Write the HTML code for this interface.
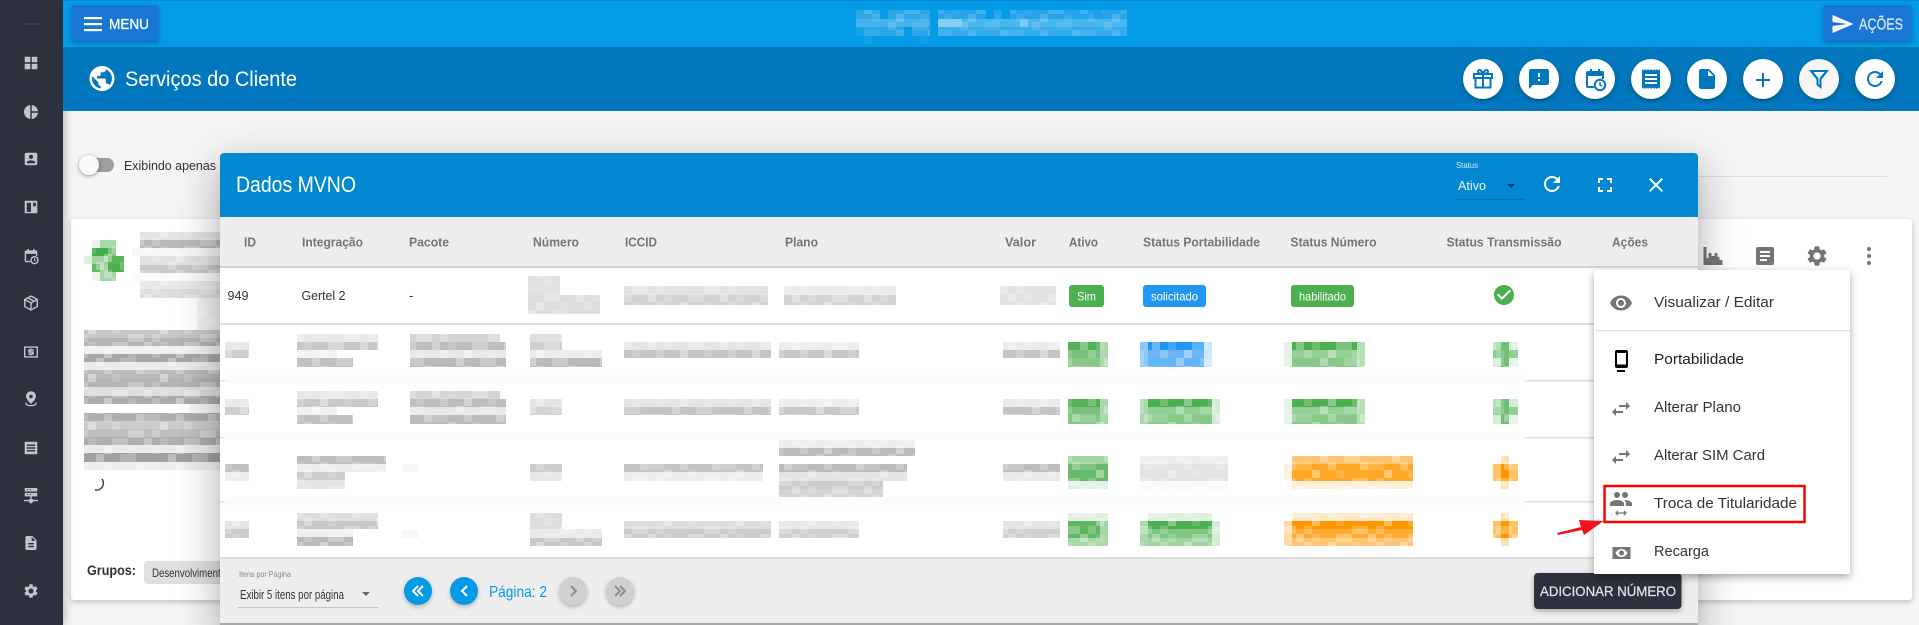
<!DOCTYPE html>
<html lang="pt">
<head>
<meta charset="utf-8">
<title>Serviços do Cliente</title>
<style>
html,body{margin:0;padding:0}
body{width:1919px;height:625px;overflow:hidden;position:relative;background:#f5f5f5;font-family:"Liberation Sans",sans-serif}
.a{position:absolute;display:block}
svg.a{left:0;top:0;width:1919px;height:625px}
svg text{font-family:"Liberation Sans",sans-serif}
#card{left:71px;top:219px;width:1841px;height:381px;background:#fff;border-radius:3px;box-shadow:0 2px 6px rgba(0,0,0,.22)}
#modal{left:220px;top:153px;width:1478px;height:470px;background:#fff;border-radius:4px 4px 0 0;box-shadow:0 11px 15px -7px rgba(0,0,0,.2),0 24px 38px 3px rgba(0,0,0,.14),0 9px 46px 8px rgba(0,0,0,.12)}
#side{left:0;top:0;width:63px;height:625px;background:#2d303d;box-shadow:0 0 10px rgba(0,0,0,.35)}
#top{left:63px;top:0;width:1856px;height:47px;background:#039be5;border-top:1px solid #0288d1;box-sizing:border-box}
#title{left:63px;top:47px;width:1856px;height:64px;background:#0277bd}
#menu{left:1594px;top:270px;width:256px;height:304px;background:#fff;box-shadow:0 3px 8px rgba(0,0,0,.35)}
.btn{position:absolute;background:#1976d2;border-radius:4px;top:5px;height:36px;box-shadow:0 2px 4px rgba(0,0,0,.25)}
.rb{position:absolute;top:59px;width:40px;height:40px;border-radius:50%;background:#fff;box-shadow:0 2px 4px rgba(0,0,0,.3)}
</style>
</head>
<body>

<div class="a" id="card"></div>
<svg class="a" viewBox="0 0 1919 625" xmlns="http://www.w3.org/2000/svg">
  <defs>
    <pattern id="n0" x="0" y="6" width="72" height="48" patternUnits="userSpaceOnUse">
      <g fill="#fff">
        <rect x="0" y="0" width="8" height="8" opacity=".3"/><rect x="16" y="0" width="8" height="8" opacity=".15"/><rect x="40" y="0" width="16" height="8" opacity=".25"/>
        <rect x="8" y="8" width="8" height="8" opacity=".2"/><rect x="32" y="8" width="8" height="8" opacity=".35"/><rect x="56" y="8" width="8" height="8" opacity=".15"/>
        <rect x="24" y="16" width="8" height="8" opacity=".3"/><rect x="48" y="16" width="16" height="8" opacity=".2"/>
        <rect x="0" y="24" width="16" height="8" opacity=".15"/><rect x="32" y="24" width="8" height="8" opacity=".25"/><rect x="64" y="24" width="8" height="8" opacity=".3"/>
        <rect x="16" y="32" width="8" height="8" opacity=".35"/><rect x="40" y="32" width="8" height="8" opacity=".15"/>
        <rect x="8" y="40" width="8" height="8" opacity=".2"/><rect x="56" y="40" width="16" height="8" opacity=".25"/>
      </g>
    </pattern>
  </defs>
  <!-- page line -->
  <rect x="1690" y="176" width="197" height="1" fill="#ddd"/>
  <!-- toggle -->
  <rect x="82" y="158" width="32" height="14" rx="7" fill="#9e9e9e"/>
  <circle cx="89" cy="165" r="10" fill="#fafafa" style="filter:drop-shadow(0 1px 2px rgba(0,0,0,.4))"/>
  <text x="124" y="170" font-size="13" fill="#333" textLength="92" lengthAdjust="spacingAndGlyphs">Exibindo apenas</text>

  <!-- avatar mosaic -->
  <rect x="92" y="240" width="8" height="8" fill="#e8f5e9"/><rect x="100" y="240" width="16" height="8" fill="#a8dbaa"/>
  <rect x="92" y="248" width="16" height="8" fill="#43ad47"/><rect x="108" y="248" width="8" height="8" fill="#7cc67f"/>
  <rect x="84" y="256" width="8" height="8" fill="#dcefdc"/><rect x="92" y="256" width="16" height="8" fill="#a0d5a3"/><rect x="108" y="256" width="16" height="8" fill="#58b45c"/>
  <rect x="92" y="264" width="8" height="8" fill="#66bb6a"/><rect x="100" y="264" width="8" height="8" fill="#a5d6a7"/><rect x="108" y="264" width="16" height="8" fill="#4caf50"/>
  <rect x="92" y="272" width="8" height="9" fill="#e8f5e9"/><rect x="100" y="272" width="16" height="9" fill="#a5d6a7"/>

  <!-- card text mosaics -->
  <rect x="140" y="232" width="80" height="8" fill="#e4e4e4"/><rect x="140" y="240" width="80" height="8" fill="#b9b9b9"/>
  <rect x="132" y="248" width="88" height="8" fill="#f6f6f6"/><rect x="140" y="256" width="80" height="9" fill="#e2e2e2"/><rect x="140" y="265" width="80" height="8" fill="#c8c8c8"/>
  <rect x="132" y="273" width="88" height="8" fill="#fafafa"/><rect x="140" y="281" width="80" height="8" fill="#e8e8e8"/><rect x="140" y="289" width="80" height="9" fill="#dcdcdc"/>
  <rect x="197" y="298" width="23" height="32" fill="#f1f1f1"/>
  <rect x="84" y="330" width="136" height="8" fill="#c8c8c8"/><rect x="84" y="338" width="136" height="8" fill="#b5b5b5"/><rect x="84" y="346" width="136" height="8" fill="#f0f0f0"/><rect x="84" y="354" width="136" height="8" fill="#a8a8a8"/><rect x="84" y="362" width="136" height="8" fill="#eaeaea"/><rect x="84" y="370" width="136" height="8" fill="#bbb"/><rect x="84" y="378" width="136" height="9" fill="#b4b4b4"/><rect x="84" y="387" width="136" height="9" fill="#ddd"/><rect x="84" y="396" width="136" height="8" fill="#ababab"/>
  <rect x="190" y="404" width="30" height="9" fill="#f4f4f4"/>
  <rect x="84" y="413" width="136" height="8" fill="#aeaeae"/><rect x="84" y="421" width="136" height="8" fill="#ccc"/><rect x="84" y="429" width="136" height="8" fill="#c0c0c0"/><rect x="84" y="437" width="136" height="8" fill="#aeaeae"/><rect x="84" y="445" width="136" height="8" fill="#eaeaea"/><rect x="84" y="453" width="136" height="9" fill="#a0a0a0"/><rect x="84" y="462" width="136" height="8" fill="#eee"/>
  <rect x="84" y="230" width="136" height="240" fill="url(#n0)"/>
  <!-- spinner -->
  <path d="M102 479A7 7 0 0 1 95 490" fill="none" stroke="#444" stroke-width="1.6"/>
  <!-- grupos -->
  <text x="87" y="575" font-size="14" font-weight="bold" fill="#333" textLength="49" lengthAdjust="spacingAndGlyphs">Grupos:</text>
  <rect x="144" y="561" width="90" height="23" rx="4" fill="#e0e0e0"/>
  <text x="152" y="577" font-size="12" fill="#333" textLength="74" lengthAdjust="spacingAndGlyphs">Desenvolvimento</text>

  <!-- card icons -->
  <path d="M1703.500 247h3v11h2v-5h3v3h3v-3h3v4h2v3h3v5h-19z" fill="#757575" opacity=".98"/>
  <path fill="#757575" d="M1758 247h14a2 2 0 0 1 2 2v14a2 2 0 0 1-2 2h-14a2 2 0 0 1-2-2v-14a2 2 0 0 1 2-2zm2 4v2h10v-2zm0 4v2h10v-2zm0 4v2h7v-2z"/>
  <path fill="#757575" transform="translate(1805,244)" d="M19.14 12.94c.04-.3.06-.61.06-.94 0-.32-.02-.64-.07-.94l2.03-1.58a.49.49 0 0 0 .12-.61l-1.92-3.32a.488.488 0 0 0-.59-.22l-2.39.96c-.5-.38-1.03-.7-1.62-.94l-.36-2.54a.484.484 0 0 0-.48-.41h-3.84c-.24 0-.43.17-.47.41l-.36 2.54c-.59.24-1.13.57-1.62.94l-2.39-.96c-.22-.08-.47 0-.59.22L2.74 8.87c-.12.21-.08.47.12.61l2.03 1.58c-.05.3-.09.63-.09.94s.02.64.07.94l-2.03 1.58a.49.49 0 0 0-.12.61l1.92 3.32c.12.22.37.29.59.22l2.39-.96c.5.38 1.03.7 1.62.94l.36 2.54c.05.24.24.41.48.41h3.84c.24 0 .44-.17.47-.41l.36-2.54c.59-.24 1.13-.56 1.62-.94l2.39.96c.22.08.47 0 .59-.22l1.92-3.32c.12-.22.07-.47-.12-.61l-2.01-1.58zM12 15.6c-1.98 0-3.6-1.62-3.6-3.6s1.62-3.6 3.6-3.6 3.6 1.62 3.6 3.6-1.62 3.6-3.6 3.6z"/>
  <g fill="#757575"><circle cx="1869" cy="249" r="2"/><circle cx="1869" cy="256" r="2"/><circle cx="1869" cy="263" r="2"/></g>
</svg>

<!-- MODAL -->
<div class="a" id="modal"></div>
<svg class="a" viewBox="0 0 1919 625" xmlns="http://www.w3.org/2000/svg">
  <path d="M220 157a4 4 0 0 1 4-4h1470a4 4 0 0 1 4 4v60H220z" fill="#0288d1"/>
  <text x="236" y="192" font-size="22" fill="#fff" textLength="120" lengthAdjust="spacingAndGlyphs">Dados MVNO</text>
  <text x="1456" y="168" font-size="8" fill="#d5ecf8" textLength="22" lengthAdjust="spacingAndGlyphs">Status</text>
  <text x="1458" y="190" font-size="13" fill="#e8f4fb" textLength="28" lengthAdjust="spacingAndGlyphs">Ativo</text>
  <path d="M1507 184h8l-4 4z" fill="#01426f"/>
  <rect x="1456" y="199" width="68" height="1" fill="#0272b0"/>
  <path fill="#fff" transform="translate(1540,172)" d="M17.65 6.35C16.2 4.9 14.21 4 12 4c-4.42 0-7.99 3.58-7.99 8s3.57 8 7.99 8c3.73 0 6.84-2.55 7.73-6h-2.08c-.82 2.33-3.04 4-5.65 4-3.31 0-6-2.69-6-6s2.69-6 6-6c1.66 0 3.14.69 4.22 1.78L13 11h7V4l-2.35 2.35z"/>
  <path fill="#fff" transform="translate(1593,173)" d="M7 14H5v5h5v-2H7v-3zm-2-4h2V7h3V5H5v5zm12 7h-3v2h5v-5h-2v3zM14 5v2h3v3h2V5h-5z"/>
  <path fill="#fff" transform="translate(1644,173)" d="M19 6.41L17.59 5 12 10.59 6.41 5 5 6.41 10.59 12 5 17.59 6.41 19 12 13.41 17.59 19 19 17.59 13.41 12z"/>

  <!-- table head -->
  <rect x="220" y="217" width="1478" height="50" fill="#eee"/>
  <rect x="220" y="266" width="1478" height="2" fill="#d4d4d4"/>
  <g font-size="13" font-weight="bold" fill="#757575">
    <text x="244" y="246.500" textLength="12" lengthAdjust="spacingAndGlyphs">ID</text>
    <text x="302" y="246.500" textLength="61" lengthAdjust="spacingAndGlyphs">Integração</text>
    <text x="409" y="246.500" textLength="40" lengthAdjust="spacingAndGlyphs">Pacote</text>
    <text x="533" y="246.500" textLength="46" lengthAdjust="spacingAndGlyphs">Número</text>
    <text x="625" y="246.500" textLength="32" lengthAdjust="spacingAndGlyphs">ICCID</text>
    <text x="785" y="246.500" textLength="33" lengthAdjust="spacingAndGlyphs">Plano</text>
    <text x="1005" y="246.500" textLength="31" lengthAdjust="spacingAndGlyphs">Valor</text>
    <text x="1069" y="246.500" textLength="29" lengthAdjust="spacingAndGlyphs">Ativo</text>
    <text x="1143" y="246.500" textLength="117" lengthAdjust="spacingAndGlyphs">Status Portabilidade</text>
    <text x="1290.500" y="246.500" textLength="86" lengthAdjust="spacingAndGlyphs">Status Número</text>
    <text x="1446.500" y="246.500" textLength="115" lengthAdjust="spacingAndGlyphs">Status Transmissão</text>
    <text x="1612" y="246.500" textLength="36" lengthAdjust="spacingAndGlyphs">Ações</text>
  </g>

  <!-- row 1 -->
  <g font-size="13" fill="#333">
    <text x="227.500" y="300" textLength="21" lengthAdjust="spacingAndGlyphs">949</text>
    <text x="301.500" y="300" textLength="44" lengthAdjust="spacingAndGlyphs">Gertel 2</text>
    <text x="409" y="300">-</text>
  </g>
  <rect x="528" y="276" width="32" height="19" fill="#e2e2e2"/><rect x="528" y="295" width="72" height="19" fill="#dcdcdc"/>
  <rect x="624" y="286" width="144" height="9" fill="#e2e2e2"/><rect x="624" y="295" width="144" height="10" fill="#d2d2d2"/>
  <rect x="784" y="286" width="112" height="9" fill="#eaeaea"/><rect x="784" y="295" width="112" height="10" fill="#d4d4d4"/>
  <rect x="1000" y="286" width="56" height="19" fill="#e2e2e2"/>
  <rect x="520" y="270" width="540" height="46" fill="url(#n0)"/>
  <rect x="1069" y="285" width="35" height="22" rx="3" fill="#4caf50"/>
  <text x="1077" y="300.500" font-size="12" fill="#fff" textLength="19" lengthAdjust="spacingAndGlyphs">Sim</text>
  <rect x="1143" y="285" width="63" height="22" rx="3" fill="#2196f3"/>
  <text x="1151" y="300.500" font-size="12" fill="#fff" textLength="47" lengthAdjust="spacingAndGlyphs">solicitado</text>
  <rect x="1291" y="285" width="63" height="22" rx="3" fill="#4caf50"/>
  <text x="1299" y="300.500" font-size="12" fill="#fff" textLength="47" lengthAdjust="spacingAndGlyphs">habilitado</text>
  <path fill="#4caf50" transform="translate(1492,283)" d="M12 2C6.48 2 2 6.48 2 12s4.48 10 10 10 10-4.48 10-10S17.52 2 12 2zm-2 15l-5-5 1.41-1.41L10 14.17l7.59-7.59L19 8l-9 9z"/>

  <!-- separators -->
  <rect x="220" y="323" width="1478" height="2" fill="#e0e0e0"/>
  <g fill="#e0e0e0">
    <rect x="220" y="380" width="1478" height="1.5"/><rect x="220" y="437" width="1478" height="1.5"/><rect x="220" y="501" width="1478" height="1.5"/>
  </g>
  <g fill="#fbfbfb">
    <rect x="225" y="375" width="1300" height="8"/><rect x="225" y="432" width="1300" height="8"/><rect x="225" y="497" width="1300" height="8"/>
  </g>

  <!-- row 2 -->
  <rect x="225" y="342" width="24" height="8" fill="#e8e8e8"/><rect x="225" y="350" width="24" height="8" fill="#cfcfcf"/>
  <rect x="297" y="334" width="81" height="8" fill="#e8e8e8"/><rect x="297" y="342" width="81" height="8" fill="#c8c8c8"/><rect x="297" y="350" width="40" height="8" fill="#f2f2f2"/><rect x="297" y="358" width="56" height="9" fill="#c0c0c0"/>
  <rect x="410" y="334" width="90" height="8" fill="#d5d5d5"/><rect x="410" y="342" width="96" height="8" fill="#bdbdbd"/><rect x="410" y="350" width="96" height="8" fill="#e8e8e8"/><rect x="410" y="358" width="96" height="9" fill="#bbb"/>
  <rect x="530" y="334" width="32" height="8" fill="#e0e0e0"/><rect x="530" y="342" width="32" height="8" fill="#cfcfcf"/><rect x="530" y="350" width="72" height="8" fill="#ececec"/><rect x="530" y="358" width="72" height="9" fill="#bbb"/>
  <rect x="624" y="342" width="147" height="8" fill="#e4e4e4"/><rect x="624" y="350" width="147" height="8" fill="#c4c4c4"/>
  <rect x="779" y="342" width="80" height="8" fill="#eee"/><rect x="779" y="350" width="80" height="8" fill="#c8c8c8"/>
  <rect x="1003" y="342" width="57" height="8" fill="#eaeaea"/><rect x="1003" y="350" width="57" height="8" fill="#c4c4c4"/>
  <rect x="1068" y="342" width="32" height="8" fill="#52b156"/><rect x="1100" y="342" width="8" height="25" fill="#aad8ac"/><rect x="1068" y="350" width="32" height="8" fill="#78c07b"/><rect x="1068" y="358" width="32" height="9" fill="#88c98a"/>
  <rect x="1140" y="342" width="8" height="25" fill="#8fc9f8"/><rect x="1148" y="342" width="56" height="8" fill="#2196f3"/><rect x="1204" y="342" width="8" height="25" fill="#cbe6fc"/><rect x="1148" y="350" width="56" height="8" fill="#6db6f6"/><rect x="1148" y="358" width="56" height="9" fill="#64b5f6"/>
  <rect x="1284" y="342" width="8" height="25" fill="#e3f2e4"/><rect x="1292" y="342" width="65" height="8" fill="#4caf50"/><rect x="1357" y="342" width="8" height="25" fill="#b5dfb7"/><rect x="1292" y="350" width="65" height="8" fill="#93d096"/><rect x="1292" y="358" width="65" height="9" fill="#88c98a"/>
  <rect x="1493" y="350" width="25" height="8" fill="#8fcf92"/><rect x="1501" y="342" width="8" height="25" fill="#6fc073"/><rect x="1493" y="342" width="8" height="8" fill="#b5dfb7"/><rect x="1509" y="342" width="9" height="8" fill="#d6ecd7"/><rect x="1493" y="358" width="8" height="9" fill="#d6ecd7"/><rect x="1509" y="358" width="9" height="9" fill="#e8f5e9"/>

  <!-- row 3 -->
  <rect x="225" y="399" width="24" height="8" fill="#e8e8e8"/><rect x="225" y="407" width="24" height="8" fill="#cfcfcf"/>
  <rect x="297" y="391" width="81" height="8" fill="#e8e8e8"/><rect x="297" y="399" width="81" height="8" fill="#c8c8c8"/><rect x="297" y="407" width="40" height="8" fill="#f2f2f2"/><rect x="297" y="415" width="56" height="9" fill="#c0c0c0"/>
  <rect x="410" y="391" width="90" height="8" fill="#d5d5d5"/><rect x="410" y="399" width="96" height="8" fill="#bdbdbd"/><rect x="410" y="407" width="96" height="8" fill="#e8e8e8"/><rect x="410" y="415" width="96" height="9" fill="#bbb"/>
  <rect x="530" y="399" width="32" height="8" fill="#e4e4e4"/><rect x="530" y="407" width="32" height="8" fill="#d2d2d2"/>
  <rect x="624" y="399" width="147" height="8" fill="#e4e4e4"/><rect x="624" y="407" width="147" height="8" fill="#c4c4c4"/>
  <rect x="779" y="399" width="80" height="8" fill="#eee"/><rect x="779" y="407" width="80" height="8" fill="#c8c8c8"/>
  <rect x="1003" y="399" width="57" height="8" fill="#eaeaea"/><rect x="1003" y="407" width="57" height="8" fill="#c4c4c4"/>
  <rect x="1068" y="399" width="32" height="8" fill="#52b156"/><rect x="1100" y="399" width="8" height="25" fill="#aad8ac"/><rect x="1068" y="407" width="32" height="8" fill="#78c07b"/><rect x="1068" y="415" width="32" height="9" fill="#88c98a"/>
  <rect x="1140" y="399" width="8" height="25" fill="#a9d8ab"/><rect x="1148" y="399" width="64" height="8" fill="#4caf50"/><rect x="1212" y="399" width="8" height="25" fill="#d4ecd5"/><rect x="1148" y="407" width="64" height="8" fill="#8fcf92"/><rect x="1148" y="415" width="64" height="9" fill="#88c98a"/>
  <rect x="1284" y="399" width="8" height="25" fill="#e3f2e4"/><rect x="1292" y="399" width="65" height="8" fill="#4caf50"/><rect x="1357" y="399" width="8" height="25" fill="#b5dfb7"/><rect x="1292" y="407" width="65" height="8" fill="#93d096"/><rect x="1292" y="415" width="65" height="9" fill="#88c98a"/>
  <rect x="1493" y="407" width="25" height="8" fill="#8fcf92"/><rect x="1501" y="399" width="8" height="25" fill="#6fc073"/><rect x="1493" y="399" width="8" height="8" fill="#b5dfb7"/><rect x="1509" y="399" width="9" height="8" fill="#d6ecd7"/><rect x="1493" y="415" width="8" height="9" fill="#d6ecd7"/><rect x="1509" y="415" width="9" height="9" fill="#e8f5e9"/>

  <!-- row 4 -->
  <rect x="225" y="464" width="24" height="8" fill="#c0c0c0"/><rect x="225" y="472" width="24" height="9" fill="#eee"/>
  <rect x="297" y="456" width="89" height="8" fill="#bdbdbd"/><rect x="297" y="464" width="89" height="8" fill="#eee"/><rect x="297" y="472" width="48" height="8" fill="#ccc"/><rect x="297" y="480" width="48" height="9" fill="#e4e4e4"/>
  <rect x="402" y="464" width="16" height="8" fill="#f6f6f6"/>
  <rect x="530" y="464" width="32" height="8" fill="#ccc"/><rect x="530" y="472" width="32" height="9" fill="#e8e8e8"/>
  <rect x="624" y="464" width="139" height="8" fill="#c4c4c4"/><rect x="624" y="472" width="139" height="9" fill="#eee"/>
  <rect x="779" y="440" width="136" height="8" fill="#eee"/><rect x="779" y="448" width="136" height="8" fill="#bbb"/><rect x="779" y="464" width="128" height="8" fill="#bbb"/><rect x="779" y="472" width="128" height="9" fill="#e4e4e4"/><rect x="779" y="481" width="104" height="8" fill="#ccc"/><rect x="779" y="489" width="104" height="8" fill="#d4d4d4"/>
  <rect x="1003" y="464" width="57" height="8" fill="#bdbdbd"/><rect x="1003" y="472" width="57" height="9" fill="#eaeaea"/>
  <rect x="1068" y="456" width="40" height="8" fill="#a0d5a3"/><rect x="1068" y="464" width="40" height="17" fill="#68bb6c"/><rect x="1068" y="481" width="40" height="8" fill="#e3f1e3"/>
  <rect x="1140" y="456" width="88" height="8" fill="#eee"/><rect x="1140" y="464" width="88" height="17" fill="#e3e3e3"/><rect x="1140" y="481" width="88" height="8" fill="#f9f9f9"/>
  <rect x="1292" y="456" width="121" height="8" fill="#ffc570"/><rect x="1284" y="464" width="8" height="17" fill="#fff0dc"/><rect x="1292" y="464" width="121" height="17" fill="#ffa726"/><rect x="1292" y="481" width="121" height="8" fill="#fff0dc"/>
  <rect x="1493" y="464" width="25" height="17" fill="#ffc266"/><rect x="1501" y="456" width="8" height="33" fill="#ffe0b2"/><rect x="1501" y="464" width="8" height="17" fill="#ff9800"/>

  <!-- row 5 -->
  <rect x="225" y="521" width="24" height="8" fill="#e4e4e4"/><rect x="225" y="529" width="24" height="9" fill="#ccc"/>
  <rect x="297" y="513" width="81" height="8" fill="#ddd"/><rect x="297" y="521" width="81" height="8" fill="#c8c8c8"/><rect x="297" y="529" width="56" height="8" fill="#f0f0f0"/><rect x="297" y="537" width="56" height="9" fill="#bbb"/>
  <rect x="402" y="530" width="16" height="8" fill="#f6f6f6"/>
  <rect x="530" y="513" width="32" height="16" fill="#ddd"/><rect x="530" y="529" width="72" height="9" fill="#eaeaea"/><rect x="530" y="538" width="72" height="8" fill="#c8c8c8"/>
  <rect x="624" y="521" width="147" height="8" fill="#ddd"/><rect x="624" y="529" width="147" height="9" fill="#ccc"/>
  <rect x="779" y="521" width="80" height="8" fill="#e8e8e8"/><rect x="779" y="529" width="80" height="9" fill="#d0d0d0"/>
  <rect x="1003" y="521" width="57" height="8" fill="#e4e4e4"/><rect x="1003" y="529" width="57" height="9" fill="#d0d0d0"/>
  <rect x="1068" y="513" width="40" height="8" fill="#e0f0e0"/><rect x="1068" y="521" width="32" height="17" fill="#5fb763"/><rect x="1100" y="521" width="8" height="17" fill="#a5d6a7"/><rect x="1068" y="538" width="40" height="8" fill="#a9d8ab"/>
  <rect x="1148" y="513" width="64" height="8" fill="#e0f0e0"/><rect x="1140" y="521" width="8" height="25" fill="#a9d8ab"/><rect x="1148" y="521" width="64" height="8" fill="#4caf50"/><rect x="1148" y="529" width="64" height="9" fill="#7fc683"/><rect x="1148" y="538" width="64" height="8" fill="#a0d5a3"/><rect x="1212" y="521" width="8" height="25" fill="#d4ecd5"/>
  <rect x="1292" y="513" width="121" height="8" fill="#ffe8c8"/><rect x="1284" y="521" width="8" height="25" fill="#ffd9a6"/><rect x="1292" y="521" width="121" height="8" fill="#ff9800"/><rect x="1292" y="529" width="121" height="9" fill="#ffab33"/><rect x="1292" y="538" width="121" height="8" fill="#ffc570"/>
  <rect x="1493" y="521" width="25" height="17" fill="#ffc266"/><rect x="1501" y="513" width="8" height="33" fill="#ffe0b2"/><rect x="1501" y="521" width="8" height="17" fill="#ff9800"/>

  <rect x="224" y="326" width="1300" height="224" fill="url(#n0)"/>

  <!-- footer -->
  <rect x="220" y="558" width="1478" height="65" fill="#eee"/>
  <rect x="220" y="557" width="1478" height="2" fill="#dcdcdc"/>
  <rect x="220" y="623" width="1478" height="2" fill="#a8a8a8"/>
  <text x="239" y="577" font-size="8" fill="#888" textLength="52" lengthAdjust="spacingAndGlyphs">Itens por Página</text>
  <text x="240" y="599" font-size="13" fill="#333" textLength="104" lengthAdjust="spacingAndGlyphs">Exibir 5 itens por página</text>
  <path d="M362 592h8l-4 4z" fill="#666"/>
  <rect x="238" y="607" width="140" height="1" fill="#c4c4c4"/>
  <g style="filter:drop-shadow(0 2px 2px rgba(0,0,0,.25))">
    <circle cx="418" cy="591" r="14" fill="#039be5"/><circle cx="464" cy="591" r="14" fill="#039be5"/>
    <circle cx="573" cy="591" r="14" fill="#d0d0d0"/><circle cx="620" cy="591" r="14" fill="#d0d0d0"/>
  </g>
  <g fill="none" stroke-width="2">
    <path d="M418 586l-5 5 5 5M423 586l-5 5 5 5" stroke="#fff"/>
    <path d="M467 586l-5 5 5 5" stroke="#fff"/>
    <path d="M571 586l5 5-5 5" stroke="#8d8d8d"/>
    <path d="M615 586l5 5-5 5M620 586l5 5-5 5" stroke="#8d8d8d"/>
  </g>
  <text x="489" y="597" font-size="16" fill="#039be5" textLength="58" lengthAdjust="spacingAndGlyphs">Página: 2</text>

  <!-- add button -->
  <rect x="1534" y="573" width="147.500" height="36" rx="4" fill="#2d303d" style="filter:drop-shadow(0 2px 3px rgba(0,0,0,.3))"/>
  <text x="1540" y="596" font-size="14" fill="#e4e4e4" stroke="#e4e4e4" stroke-width=".25" textLength="136" lengthAdjust="spacingAndGlyphs">ADICIONAR NÚMERO</text>
</svg>

<!-- CHROME -->
<div class="a" id="side"></div>
<div class="a" id="top"></div>
<div class="a" id="title"></div>
<div class="btn" style="left:71px;width:88px"></div>
<div class="btn" style="left:1822.500px;width:89px"></div>
<div class="rb" style="left:1463px"></div>
<div class="rb" style="left:1519px"></div>
<div class="rb" style="left:1575px"></div>
<div class="rb" style="left:1631px"></div>
<div class="rb" style="left:1687px"></div>
<div class="rb" style="left:1743px"></div>
<div class="rb" style="left:1799px;background:#f6f6f6"></div>
<div class="rb" style="left:1855px"></div>
<svg class="a" viewBox="0 0 1919 625" xmlns="http://www.w3.org/2000/svg">
  <rect x="23" y="23.5" width="16" height="1" fill="#4a4d58"/>
  <g fill="#c4c4c4">
    <path transform="translate(22.6,54.6) scale(.7)" d="M3 3h8v8H3zm10 0h8v8h-8zM3 13h8v8H3zm10 0h8v8h-8z"/>
    <path transform="translate(22.6,103.6) scale(.7)" d="M11 2v20c-5.07-.5-9-4.79-9-10s3.93-9.5 9-10zm2.03 0v8.99H22c-.47-4.74-4.24-8.52-8.97-8.99zm0 11.01V22c4.74-.47 8.5-4.25 8.97-8.99h-8.97z"/>
    <path transform="translate(22.6,150.6) scale(.7)" d="M3 5v14c0 1.1.89 2 2 2h14c1.1 0 2-.9 2-2V5c0-1.1-.9-2-2-2H5c-1.11 0-2 .9-2 2zm12 4c0 1.66-1.34 3-3 3s-3-1.34-3-3 1.34-3 3-3 3 1.34 3 3zm-9 8c0-2 4-3.1 6-3.1s6 1.1 6 3.1v1H6v-1z"/>
    <path fill-rule="evenodd" transform="translate(22.6,198.6) scale(.7)" d="M3 3h18v18H3zM6 6v13h6V6zM15 6v5h4V6z"/>
    <path transform="translate(22.6,247.6) scale(.7)" d="M5 4h2V2h2v2h6V2h2v2h2a2 2 0 0 1 2 2v6h-2V9H5v10h6v2H5a2 2 0 0 1-2-2V6a2 2 0 0 1 2-2z"/>
    <path transform="translate(22.6,343.6) scale(.7)" fill-rule="evenodd" d="M2 4h20v16H2zM4 6v12h16V6zm7 1h2v1h3v2h-5v1h4a1 1 0 0 1 1 1v3a1 1 0 0 1-1 1h-2v1h-2v-1H8v-2h5v-1H9a1 1 0 0 1-1-1V9a1 1 0 0 1 1-1h2z"/>
    <path transform="translate(22.6,390.6) scale(.7)" d="M12 1c-3.9 0-7 3.1-7 7 0 5 7 11 7 11s7-6 7-11c0-3.9-3.1-7-7-7zm0 5a2.5 2.5 0 1 1 0 5 2.5 2.5 0 0 1 0-5zM4 17v2c0 2 3.6 3.5 8 3.5s8-1.5 8-3.5v-2h-2v2c0 .6-2.6 1.5-6 1.5S6 19.600 6 19v-2z"/>
    <path fill-rule="evenodd" transform="translate(22.6,439.6) scale(.7)" d="M3 3h18v18H3zM6 7v2h12V7zm0 4v2h12v-2zm0 4v2h12v-2z"/>
    <path fill-rule="evenodd" transform="translate(22.6,486.6) scale(.7)" d="M3 2h18v5H3zM6 4v1h2V4zm4 0v1h2V4zM3 9h18v5H3zM6 11v1h2v-1zm4 0v1h2v-1zM11 14h2v4h2v1h7v2h-7a3 3 0 0 1-6 0H2v-2h7v-1h2z"/>
    <path transform="translate(22.6,534.6) scale(.7)" d="M14 2H6c-1.1 0-2 .9-2 2v16c0 1.1.89 2 1.99 2H18c1.1 0 2-.9 2-2V8l-6-6zm2 16H8v-2h8v2zm0-4H8v-2h8v2zm-3-5V3.5L18.5 9H13z"/>
    <path transform="translate(22.6,582.6) scale(.7)" d="M19.14 12.94c.04-.3.06-.61.06-.94 0-.32-.02-.64-.07-.94l2.03-1.58a.49.49 0 0 0 .12-.61l-1.92-3.32a.488.488 0 0 0-.59-.22l-2.39.96c-.5-.38-1.03-.7-1.62-.94l-.36-2.54a.484.484 0 0 0-.48-.41h-3.84c-.24 0-.43.17-.47.41l-.36 2.54c-.59.24-1.13.57-1.62.94l-2.39-.96c-.22-.08-.47 0-.59.22L2.74 8.87c-.12.21-.08.47.12.61l2.03 1.58c-.05.3-.09.63-.09.94s.02.64.07.94l-2.03 1.58a.49.49 0 0 0-.12.61l1.92 3.32c.12.22.37.29.59.22l2.39-.96c.5.38 1.03.7 1.62.94l.36 2.54c.05.24.24.41.48.41h3.84c.24 0 .44-.17.47-.41l.36-2.54c.59-.24 1.13-.56 1.62-.94l2.39.96c.22.08.47 0 .59-.22l1.92-3.32c.12-.22.07-.47-.12-.61l-2.01-1.58zM12 15.6c-1.98 0-3.6-1.62-3.6-3.6s1.62-3.6 3.6-3.6 3.6 1.62 3.6 3.6-1.62 3.6-3.6 3.6z"/>
  </g>
  <g transform="translate(22.6,247.6) scale(.7)"><circle cx="17" cy="18" r="5" fill="#2d303d" stroke="#c4c4c4" stroke-width="2"/><path d="M17 15v3l2 1" fill="none" stroke="#c4c4c4" stroke-width="1.500"/></g>
  <g transform="translate(22.6,294.6) scale(.7)" fill="none" stroke="#c4c4c4" stroke-width="2"><path d="M12 2l9 5v10l-9 5-9-5V7z"/><path d="M3 7l9 5 9-5M12 12v10M7.500 4.500l9 5"/></g>

  <!-- top bar -->
  <g fill="#fff"><rect x="84" y="17" width="18" height="2.200"/><rect x="84" y="23" width="18" height="2.200"/><rect x="84" y="29" width="18" height="2.200"/></g>
  <text x="109" y="29" font-size="15" fill="#fff" stroke="#fff" stroke-width=".3" textLength="40" lengthAdjust="spacingAndGlyphs">MENU</text>
  <path fill="#fff" transform="translate(1830.500,12)" d="M2.010 21L23 12 2.010 3 2 10l15 2-15 2z"/>
  <text x="1859" y="29.500" font-size="16" fill="#dfe9f5" stroke="#dfe9f5" stroke-width=".25" textLength="44" lengthAdjust="spacingAndGlyphs">AÇÕES</text>

  <!-- pixelated top title -->
  <g>
    <rect x="856" y="10" width="74" height="9" fill="#2fa8ea"/><rect x="856" y="19" width="74" height="8" fill="#45b3ee"/><rect x="856" y="27" width="74" height="9" fill="#2aa6ea"/><rect x="864" y="36" width="8" height="8" fill="#12a0e6"/><rect x="920" y="36" width="8" height="8" fill="#12a0e6"/>
    <rect x="938" y="10" width="189" height="9" fill="#25a4e9"/><rect x="938" y="19" width="189" height="8" fill="#4ab6ee"/><rect x="938" y="27" width="189" height="9" fill="#35acec"/>
    <rect x="856" y="10" width="74" height="26" fill="url(#n0)" opacity=".45"/><rect x="938" y="10" width="189" height="26" fill="url(#n0)" opacity=".45"/>
    <rect x="938" y="19" width="24" height="8" fill="#86cdf2"/><rect x="1020" y="19" width="8" height="8" fill="#7cc9f2"/>
  </g>
  <g>
    <rect x="880" y="10" width="8" height="9" fill="#039be5"/><rect x="904" y="27" width="8" height="9" fill="#039be5"/><rect x="856" y="27" width="8" height="9" fill="#18a0e6"/>
    <rect x="1002" y="10" width="8" height="9" fill="#039be5"/><rect x="986" y="10" width="8" height="9" fill="#039be5"/><rect x="1094" y="10" width="8" height="9" fill="#1ca2e7"/>
  </g>

  <!-- title -->
  <path fill="#fff" transform="translate(87,63.500) scale(1.250)" d="M12 2C6.480 2 2 6.480 2 12s4.480 10 10 10 10-4.480 10-10S17.520 2 12 2zm-1 17.930c-3.950-.490-7-3.850-7-7.930 0-.620.080-1.210.210-1.790L9 15v1c0 1.100.9 2 2 2v1.930zm6.900-2.540c-.260-.810-1-1.390-1.900-1.390h-1v-3c0-.550-.450-1-1-1H8v-2h2c.550 0 1-.450 1-1V7h2c1.100 0 2-.9 2-2v-.410c2.930 1.190 5 4.060 5 7.410 0 2.080-.8 3.970-2.100 5.390z"/>
  <text x="125" y="86" font-size="21" fill="#fff" textLength="172" lengthAdjust="spacingAndGlyphs">Serviços do Cliente</text>

  <!-- round icons -->
  <g fill="#0277bd">
    <g transform="translate(1471,67)" fill="none" stroke="#0277bd" stroke-width="2"><path d="M3 7h18v4H3zM4.500 11v9.500h15V11M12 7v13.500"/><path d="M12 7C9 7 7 6 7 4.500S9 2.500 10 3.500 12 7 12 7zM12 7c3 0 5-1 5-2.500S15 2.500 14 3.500 12 7 12 7z"/></g>
    <path transform="translate(1527,67)" d="M20 2H4c-1.100 0-1.990.9-1.990 2L2 22l4-4h14c1.100 0 2-.9 2-2V4c0-1.100-.9-2-2-2zm-7 12h-2v-2h2v2zm0-4h-2V6h2v4z"/>
    <path transform="translate(1583,67)" d="M5 4h2V2h2v2h6V2h2v2h2a2 2 0 0 1 2 2v6h-2V9H5v10h6v2H5a2 2 0 0 1-2-2V6a2 2 0 0 1 2-2z"/>
    <path transform="translate(1639,67)" d="M18 17H6v-2h12v2zm0-4H6v-2h12v2zm0-4H6V7h12v2zM3 22l1.500-1.500L6 22l1.500-1.500L9 22l1.500-1.500L12 22l1.500-1.500L15 22l1.500-1.500L18 22l1.500-1.500L21 22V2l-1.500 1.500L18 2l-1.500 1.500L15 2l-1.500 1.500L12 2l-1.500 1.500L9 2 7.500 3.500 6 2 4.500 3.500 3 2v20z"/>
    <path transform="translate(1695,67)" d="M6 2c-1.100 0-1.990.9-1.990 2L4 20c0 1.100.89 2 1.990 2H18c1.100 0 2-.9 2-2V8l-6-6H6zm7 7V3.500L18.500 9H13z"/>
    <path transform="translate(1751,68)" d="M19 13h-6v6h-2v-6H5v-2h6V5h2v6h6v2z"/>
    <path transform="translate(1807,67)" fill-rule="evenodd" d="M2 3h20l-7.500 9.500V22L9.500 18v-5.500zM6.500 5l5 6.500v5.500l1 .9V11.500l5-6.500z"/>
    <path transform="translate(1863,67)" d="M17.650 6.350C16.200 4.900 14.210 4 12 4c-4.420 0-7.990 3.580-7.990 8s3.570 8 7.990 8c3.730 0 6.840-2.550 7.730-6h-2.080c-.82 2.330-3.040 4-5.650 4-3.310 0-6-2.690-6-6s2.690-6 6-6c1.660 0 3.140.69 4.220 1.780L13 11h7V4l-2.350 2.350z"/>
  </g>
  <g transform="translate(1583,67)"><circle cx="17" cy="18" r="5.200" fill="#fff" stroke="#0277bd" stroke-width="2"/><path d="M17 15v3l2 1.200" fill="none" stroke="#0277bd" stroke-width="1.500"/></g>
</svg>

<!-- DROPDOWN -->
<div class="a" id="menu"></div>
<svg class="a" viewBox="0 0 1919 625" xmlns="http://www.w3.org/2000/svg">
  <g transform="translate(-1,0)">
  <rect x="1595" y="330" width="256" height="1.200" fill="#e0e0e0"/>
  <g font-size="15" fill="#333">
    <text x="1655" y="307" textLength="120" lengthAdjust="spacingAndGlyphs">Visualizar / Editar</text>
    <text x="1655" y="364" textLength="90" fill="#222" lengthAdjust="spacingAndGlyphs">Portabilidade</text>
    <text x="1655" y="412" textLength="87" lengthAdjust="spacingAndGlyphs">Alterar Plano</text>
    <text x="1655" y="460" textLength="111" lengthAdjust="spacingAndGlyphs">Alterar SIM Card</text>
    <text x="1655" y="508" textLength="143" lengthAdjust="spacingAndGlyphs">Troca de Titularidade</text>
    <text x="1655" y="556" textLength="55" lengthAdjust="spacingAndGlyphs">Recarga</text>
  </g>
  <path fill="#757575" transform="translate(1610,291)" d="M12 4.500C7 4.500 2.730 7.610 1 12c1.730 4.390 6 7.500 11 7.500s9.270-3.110 11-7.500c-1.730-4.390-6-7.500-11-7.500zM12 17c-2.760 0-5-2.240-5-5s2.240-5 5-5 5 2.240 5 5-2.240 5-5 5zm0-8c-1.660 0-3 1.340-3 3s1.340 3 3 3 3-1.340 3-3-1.340-3-3-3z"/>
  <path fill="#000" fill-rule="evenodd" d="M1618 350h9a2 2 0 0 1 2 2v14a2 2 0 0 1-2 2h-9a2 2 0 0 1-2-2v-14a2 2 0 0 1 2-2zm0 3v11.500h9V353zM1618 370h8v2h-8z"/>
  <path fill="#757575" transform="translate(1610,397)" d="M6.990 11L3 15l3.990 4v-3H14v-2H6.990v-3zM21 9l-3.990-4v3H10v2h7.010v3L21 9z"/>
  <path fill="#757575" transform="translate(1610,445)" d="M6.990 11L3 15l3.990 4v-3H14v-2H6.990v-3zM21 9l-3.990-4v3H10v2h7.010v3L21 9z"/>
  <path fill="#757575" transform="translate(1610,487) scale(1)" d="M16 11c1.660 0 2.990-1.340 2.990-3S17.660 5 16 5c-1.660 0-3 1.340-3 3s1.340 3 3 3zm-8 0c1.660 0 2.990-1.340 2.990-3S9.660 5 8 5C6.340 5 5 6.340 5 8s1.340 3 3 3zm0 2c-2.330 0-7 1.170-7 3.500V19h14v-2.500c0-2.330-4.670-3.500-7-3.500zm8 0c-.29 0-.62.020-.97.050 1.160.84 1.970 1.970 1.970 3.450V19h6v-2.500c0-2.330-4.670-3.500-7-3.500z"/>
  <path fill="none" stroke="#757575" stroke-width="1.300" d="M1617 513h10M1619 511l-2 2 2 2M1625 511l2 2-2 2"/>
  <path fill="#757575" fill-rule="evenodd" d="M1613.500 547h18v12h-18zM1622.500 549c-3 0-5 2-6 4 1 2 3 4 6 4s5-2 6-4c-1-2-3-4-6-4zM1622.500 550.500a2.500 2.500 0 1 0 0 5 2.500 2.500 0 0 0 0-5z"/>
  <!-- highlight -->
  <rect x="1605.500" y="486" width="200" height="36" fill="none" stroke="#f00" stroke-width="2.500"/>
  <path fill="#f0141e" d="M1558 533l24-6-2-7 24.500 1-19.500 14-2-5-24 5z"/>
  </g>
</svg>

</body>
</html>
